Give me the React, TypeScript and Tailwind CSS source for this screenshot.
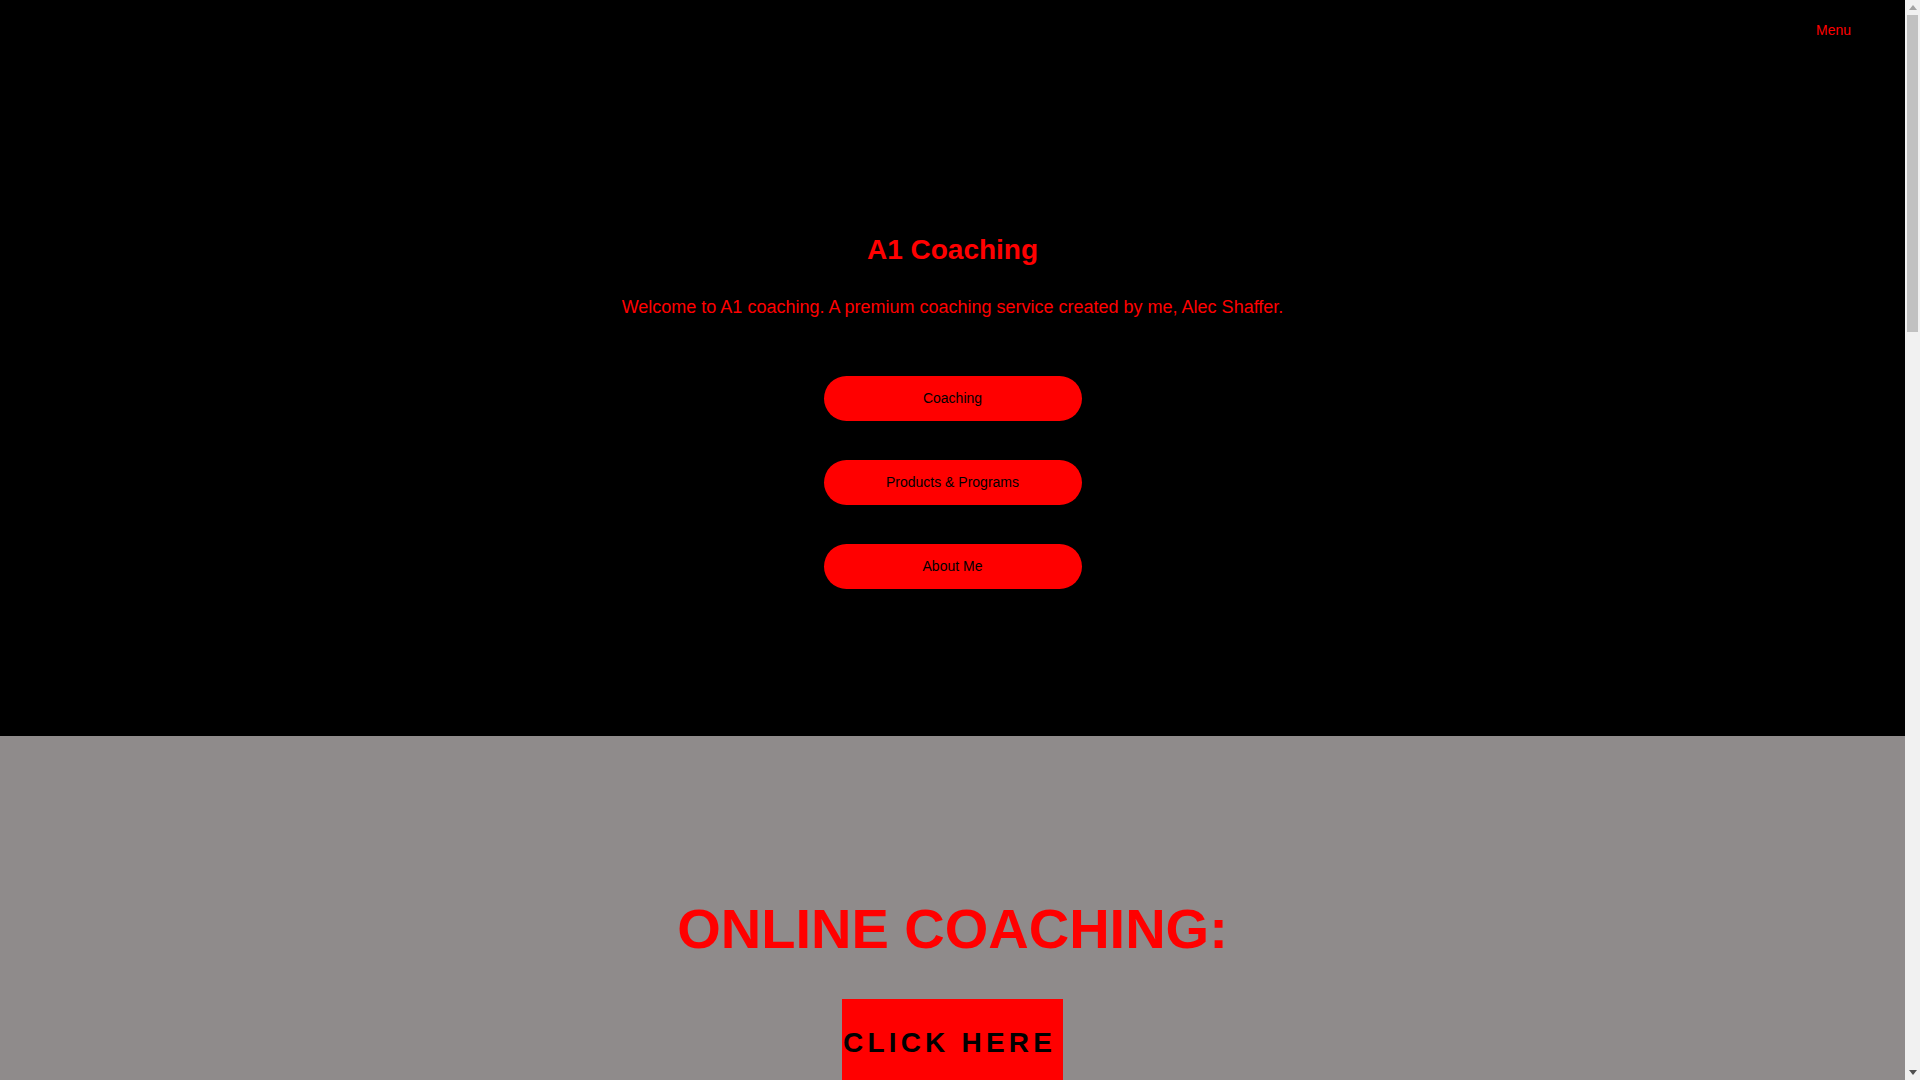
const links = ['Coaching', 'Products & Programs', 'About Me']

function PillLink(props: { label: string }) {
  return (
    <a
      href="#"
      className="flex h-[45px] w-[258px] items-center justify-center rounded-full bg-[#ff0000] text-[14px] text-black"
    >
      {props.label}
    </a>
  )
}

// classic browser scrollbar strip seen on the right of the screenshot
function ScrollStrip() {
  return (
    <aside className="flex w-[15px] shrink-0 flex-col items-center bg-[#f1f1f1]">
      <div className="flex h-[15px] items-center justify-center">
        <svg width="8" height="5" viewBox="0 0 8 5">
          <path d="M0 5 L4 0 L8 5 Z" fill="#a3a3a3" />
        </svg>
      </div>
      <div className="h-[317px] w-[11px] bg-[#c1c1c1]" />
      <div className="flex-1" />
      <div className="flex h-[15px] items-center justify-center">
        <svg width="8" height="5" viewBox="0 0 8 5">
          <path d="M0 0 L8 0 L4 5 Z" fill="#505050" />
        </svg>
      </div>
    </aside>
  )
}

export default function App() {
  return (
    <div className="flex h-screen overflow-hidden font-['Liberation_Sans',Arial,sans-serif]">
      <main className="min-w-0 flex-1">
        <section className="flex h-[736px] flex-col bg-black">
          <header className="flex h-[60px] items-center justify-end pr-[54px]">
            <span className="text-[14px] text-[#ff0000]">Menu</span>
          </header>
          <div className="mt-[173px] flex flex-col items-center">
            <h1 className="text-[28px] font-bold leading-[34px] text-[#ff0000]">A1 Coaching</h1>
            <p className="mt-[28px] text-[18px] leading-[25px] text-[#ff0000]">
              Welcome to A1 coaching. A premium coaching service created by me, Alec Shaffer.
            </p>
            <nav className="mt-[56px] flex flex-col gap-[39px]">
              {links.map((l) => (
                <PillLink key={l} label={l} />
              ))}
            </nav>
          </div>
        </section>

        <section className="flex h-[2841px] flex-col items-center bg-[#8f8b8b] pt-[165px]">
          <h2 className="text-[56px] font-bold leading-[56px] text-[#ff0000]">ONLINE COACHING:</h2>
          <a
            href="#"
            className="mt-[42px] flex w-[221px] justify-start bg-[#ff0000] py-[30px] pl-[1px] text-[28px] font-bold leading-[28px] tracking-[0.15em] text-black"
          >
            CLICK HERE
          </a>
        </section>
      </main>
      <ScrollStrip />
    </div>
  )
}
